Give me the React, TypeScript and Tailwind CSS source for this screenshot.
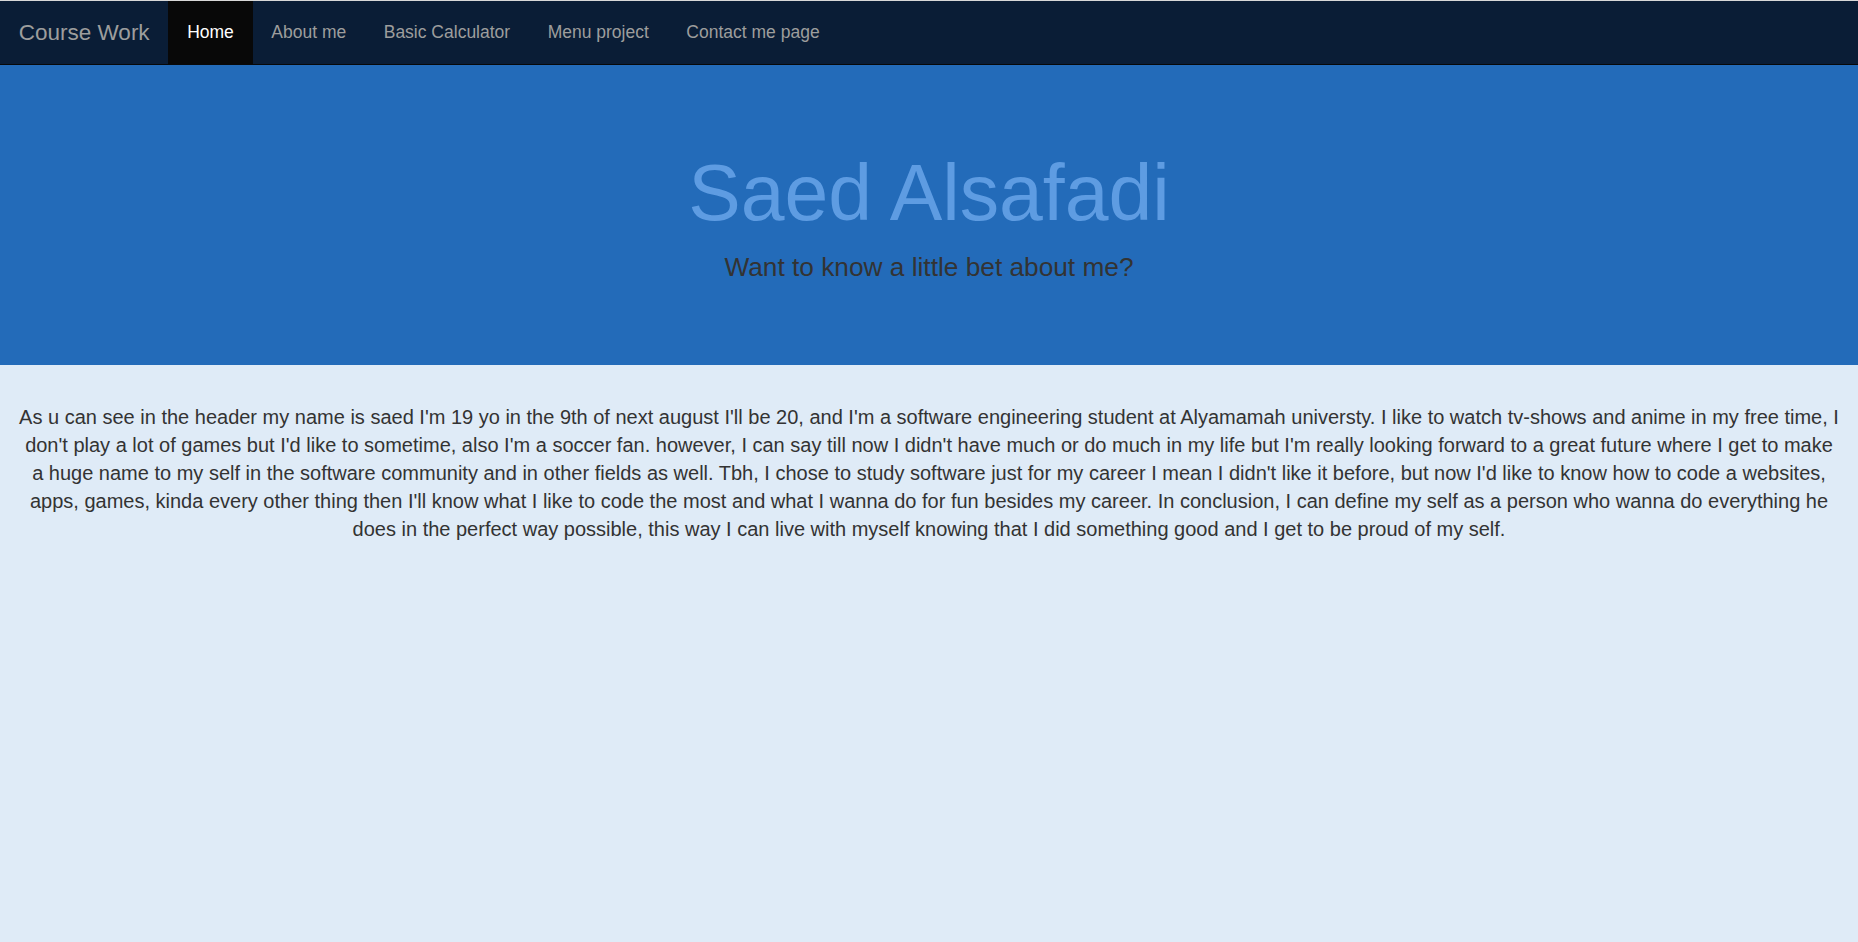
import React from "react";

const links = ["About me", "Basic Calculator", "Menu project", "Contact me page"];

export default function App() {
  return (
    <div
      className="min-h-screen bg-[#dfebf7] text-[#333]"
      style={{ fontFamily: '"Liberation Sans", Arial, sans-serif' }}
    >
      {/* navbar */}
      <nav className="flex h-[65px] border-t border-t-[#d8d8d8] border-b border-b-[#080808] bg-[#0a1d36]">
        <a className="px-[18.75px] text-[22.5px] leading-[63px] text-[#9d9d9d]">Course Work</a>
        <ul className="flex">
          <li className="bg-[#080808] px-[18.75px] text-[17.5px] leading-[63px] text-white">Home</li>
          {links.map((l) => (
            <li key={l} className="px-[18.75px] text-[17.5px] leading-[63px] text-[#9d9d9d]">
              {l}
            </li>
          ))}
        </ul>
      </nav>

      {/* jumbotron */}
      <header className="mb-[37.5px] bg-[#236bb9] py-[60px] text-center">
        <div className="px-[18.75px]">
          <h1 className="mt-[25px] mb-[12.5px] text-[78.75px] leading-[1.1] text-[#5e9ce2]">Saed Alsafadi</h1>
          <p className="mb-[18.75px] text-[26.25px] leading-[37.5px] text-[#333]">
            Want to know a little bet about me?
          </p>
        </div>
      </header>

      <main className="px-[18.75px] text-center">
        <p className="text-[20px] leading-[28px]">
          As u can see in the header my name is saed I'm 19 yo in the 9th of next august I'll be 20, and I'm a software
          engineering student at Alyamamah universty. I like to watch tv-shows and anime in my free time, I don't play a
          lot of games but I'd like to sometime, also I'm a soccer fan. however, I can say till now I didn't have much or
          do much in my life but I'm really looking forward to a great future where I get to make a huge name to my self
          in the software community and in other fields as well. Tbh, I chose to study software just for my career I mean
          I didn't like it before, but now I'd like to know how to code a websites, apps, games, kinda every other thing
          then I'll know what I like to code the most and what I wanna do for fun besides my career. In conclusion, I can
          define my self as a person who wanna do everything he does in the perfect way possible, this way I can live with
          myself knowing that I did something good and I get to be proud of my self.
        </p>
      </main>
    </div>
  );
}
